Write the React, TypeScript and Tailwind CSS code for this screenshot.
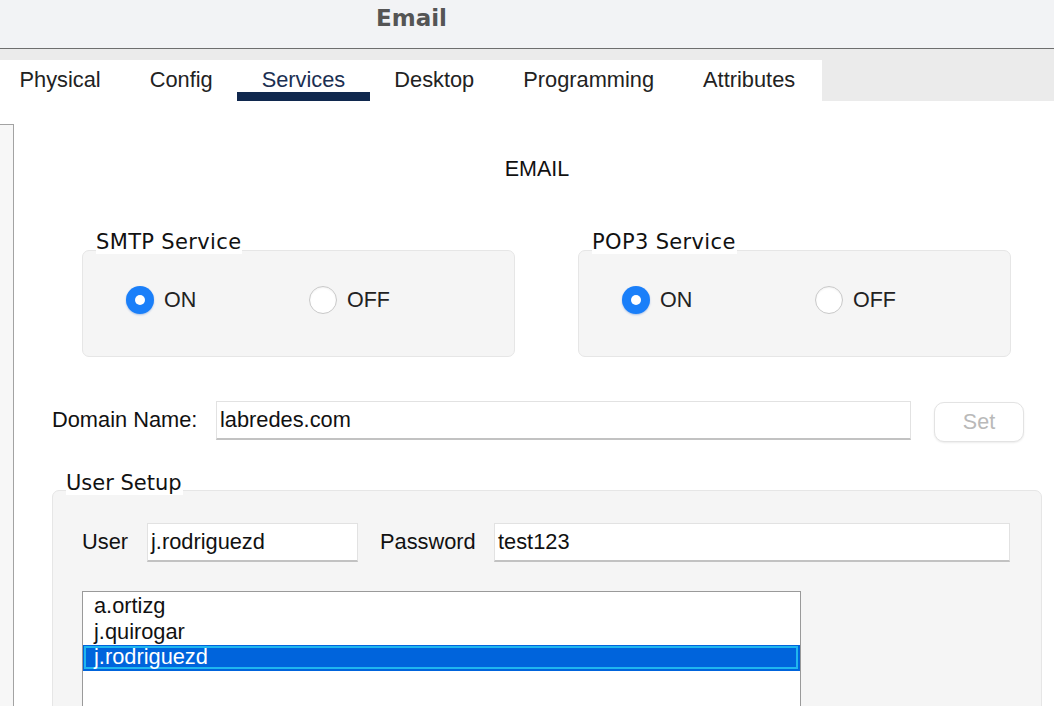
import React from "react";

const tabs = ["Physical", "Config", "Services", "Desktop", "Programming", "Attributes"];
const users = ["a.ortizg", "j.quirogar", "j.rodriguezd"];

const Radio: React.FC<{ checked?: boolean; label: string }> = ({ checked, label }) => (
  <div className="flex items-center gap-[10px]">
    {checked ? (
      <div className="w-[28px] h-[28px] rounded-full bg-[#1a7ff9] flex items-center justify-center shadow-[0_1px_2px_rgba(0,80,200,0.3)]">
        <div className="w-[10px] h-[10px] rounded-full bg-white" />
      </div>
    ) : (
      <div className="w-[28px] h-[28px] rounded-full bg-white border border-[#c9c9c9] shadow-[inset_0_1px_2px_rgba(0,0,0,0.06)]" />
    )}
    <span className="text-[21.5px] leading-[26px] text-[#222]">{label}</span>
  </div>
);

const ServiceBox: React.FC<{ title: string; onWidth: string }> = ({ title, onWidth }) => (
  <div className="flex flex-col w-[433px]">
    <span className="relative z-10 self-start ml-[14px] pr-[1px] bg-white font-['DejaVu_Sans',sans-serif] text-[21px] leading-[24px] tracking-[0.35px] text-[#111]">
      {title}
    </span>
    <div className="-mt-[4px] h-[107px] bg-[#f5f5f5] border border-[#e6e6e6] rounded-[7px] pt-[35px] pl-[43px] flex items-start">
      <div className={onWidth}>
        <Radio checked label="ON" />
      </div>
      <Radio label="OFF" />
    </div>
  </div>
);

const Field: React.FC<{ value: string; className: string }> = ({ value, className }) => (
  <div
    className={`h-[39px] bg-white border border-[#e2e2e2] border-b-2 border-b-[#c2c2c2] pl-[3px] flex items-center text-[21.8px] text-[#111] ${className}`}
  >
    {value}
  </div>
);

export default function App() {
  return (
    <div className="w-[1054px] h-[706px] overflow-hidden bg-white flex flex-col font-['Liberation_Sans',Arial,sans-serif]">
      {/* title bar */}
      <div className="h-[49px] shrink-0 bg-[#f2f3f5] border-b border-[#6e6e6e] pl-[376px] pt-[4px]">
        <span className="font-['DejaVu_Sans',sans-serif] font-bold text-[23px] leading-[28px] text-[#555]">Email</span>
      </div>
      <div className="h-[11px] shrink-0 bg-[#ebebeb]" />
      {/* tabs */}
      <div className="h-[41px] shrink-0 bg-[#ebebeb] flex">
        <div className="w-[822px] bg-white flex">
          <div className="flex -ml-[5px]">
            {tabs.map((t) => (
              <div
                key={t}
                className={`h-[41px] px-[24.5px] pt-[7px] border-b-[9px] ${
                  t === "Services" ? "border-[#10284e] text-[#1b2f52]" : "border-transparent text-[#222]"
                }`}
              >
                <span className="text-[21.8px] leading-[26px]">{t}</span>
              </div>
            ))}
          </div>
        </div>
      </div>
      {/* body */}
      <div className="flex flex-1 min-h-0">
        <div className="w-[14px] shrink-0 mt-[23px] border-t border-r border-[#a3a3a3] bg-[#f7f7f7]" />
        <div className="w-[1046px] shrink-0 flex flex-col">
          <div className="mt-[55px] text-center text-[21.5px] leading-[26px] text-[#111]">EMAIL</div>
          <div className="mt-[48px] ml-[68px] flex gap-[63px]">
            <ServiceBox title="SMTP Service" onWidth="w-[183px]" />
            <ServiceBox title="POP3 Service" onWidth="w-[193px]" />
          </div>
          <div className="mt-[44px] ml-[38px] flex items-start">
            <span className="w-[164px] h-[39px] flex items-center text-[21.8px] text-[#111]">Domain Name:</span>
            <Field value="labredes.com" className="w-[695px]" />
            <button className="ml-[23px] mt-[1px] w-[90px] h-[40px] bg-white border border-[#e3e3e3] rounded-[10px] shadow-[0_1px_2px_rgba(0,0,0,0.08)] text-[21.5px] text-[#b9b9b9]">
              Set
            </button>
          </div>
          <div className="mt-[29px] ml-[38px] flex flex-col w-[990px]">
            <span className="relative z-10 self-start ml-[14px] pr-[1px] bg-white font-['DejaVu_Sans',sans-serif] text-[21px] leading-[24px] text-[#111]">
              User Setup
            </span>
            <div className="-mt-[5px] h-[300px] bg-[#f5f5f5] border border-[#e6e6e6] rounded-[7px] pt-[32px] pl-[29px] flex flex-col">
              <div className="flex items-center">
                <span className="w-[65px] text-[21.8px] text-[#111]">User</span>
                <Field value="j.rodriguezd" className="w-[211px]" />
                <span className="ml-[22px] w-[114px] text-[21.8px] text-[#111]">Password</span>
                <Field value="test123" className="w-[516px]" />
              </div>
              <div className="mt-[29px] w-[719px] h-[160px] bg-white border border-[#9a9a9a] pt-[1px] flex flex-col">
                {users.map((u) =>
                  u === "j.rodriguezd" ? (
                    <div key={u} className="h-[26px] bg-[#0064dc] pl-[1px] pr-[2px] pt-[1px] pb-[2px]">
                      <div className="h-full border-2 border-[#1fb6ef] pl-[8px] flex items-center text-[21.8px] text-white">
                        {u}
                      </div>
                    </div>
                  ) : (
                    <div key={u} className="h-[26px] pl-[11px] flex items-center text-[21.8px] text-[#111]">
                      {u}
                    </div>
                  )
                )}
              </div>
            </div>
          </div>
        </div>
      </div>
    </div>
  );
}
